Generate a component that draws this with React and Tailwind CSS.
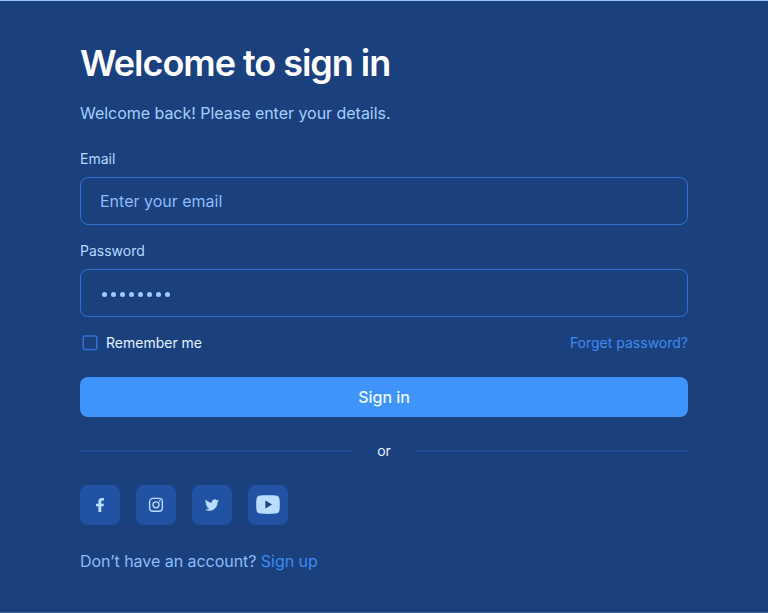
import React from "react";

function Facebook() {
  return (
    <svg viewBox="0 0 20 20" className="h-5 w-5 fill-current">
      <path d="M8.400 17v-5.800H6V8.700h2.400V6.500C8.400 4.100 9.700 3 12 3c.8 0 1.400.1 2 .2v2.300h-1.200c-1.100 0-1.500.5-1.500 1.400v1.800h2.600l-.4 2.500h-2.200V17z" />
    </svg>
  );
}

function Instagram() {
  return (
    <svg viewBox="0 0 20 20" className="h-5 w-5" fill="none" stroke="currentColor" strokeWidth="1.35">
      <rect x="3.6" y="3.4" width="12.8" height="12.8" rx="3.4" />
      <circle cx="10" cy="9.8" r="3" />
      <circle cx="13.7" cy="6.1" r=".85" fill="currentColor" stroke="none" />
    </svg>
  );
}

function Twitter() {
  return (
    <svg viewBox="0 0 24 24" className="h-[14px] w-[14px] fill-current">
      <path d="M23.95 4.57a10 10 0 0 1-2.82.77 4.96 4.96 0 0 0 2.16-2.72c-.95.55-2 .96-3.13 1.18a4.92 4.92 0 0 0-8.38 4.48C7.69 8.09 4.07 6.13 1.64 3.16a4.92 4.92 0 0 0 1.52 6.57 4.9 4.9 0 0 1-2.23-.61v.06a4.92 4.92 0 0 0 3.95 4.83 5 5 0 0 1-2.21.08 4.94 4.94 0 0 0 4.6 3.42A9.87 9.87 0 0 1 0 19.54a14 14 0 0 0 7.55 2.21c9.05 0 14-7.5 14-13.98 0-.21 0-.42-.02-.63a9.94 9.94 0 0 0 2.42-2.57z" />
    </svg>
  );
}

function Youtube() {
  return (
    <svg viewBox="0 0 24 20" className="h-5 w-6">
      <path fill="currentColor" d="M4.200.5C9.400 0 14.600 0 19.800.5c2.200.2 3.500 1.500 3.700 3.600.4 3.600.4 7.200 0 10.800-.2 2.100-1.500 3.400-3.700 3.600-5.200.5-10.400.5-15.600 0C2 18.300.7 17 .5 14.900.1 11.300.1 7.700.5 4.100.7 2 2 .7 4.200.5z" />
      <path fill="#1a4483" d="M9.400 5.600v7.800l6.600-3.900z" />
    </svg>
  );
}

const socials = [
  { name: "Facebook", Icon: Facebook },
  { name: "Instagram", Icon: Instagram },
  { name: "Twitter", Icon: Twitter },
  { name: "YouTube", Icon: Youtube },
];

const dots = Array.from({ length: 8 }, (_, i) => i);

export default function App() {
  return (
    <main className="flex h-[613px] w-full flex-col border-t border-b border-t-[#93c5fd] border-b-[#476ba0] bg-[#1a407e] px-20 pt-[42px] font-['Inter',sans-serif]">
      <h1 className="h-10 text-[36px] leading-10 font-semibold tracking-[-1.04px] whitespace-nowrap text-white">Welcome to sign in</h1>
      <p className="mt-[18px] text-base leading-6 tracking-[-0.03px] text-[#a5d0fc]">Welcome back! Please enter your details.</p>

      <label className="mt-6 text-sm leading-5 text-[#b5dafd]">Email</label>
      <div className="mt-2 flex h-12 shrink-0 items-center rounded-lg border border-[#3270cd] px-[19px] text-base text-[#8dbcf9]">Enter your email</div>

      <label className="mt-4 text-sm leading-5 text-[#b5dafd]">Password</label>
      <div className="mt-2 flex h-12 shrink-0 items-center gap-1 rounded-lg border border-[#3270cd] px-[21px] pt-[2px]">
        {dots.map((i) => (
          <span key={i} className="h-[5px] w-[5px] rounded-full bg-[#9dcbff]" />
        ))}
      </div>

      <div className="mt-4 flex items-center justify-between text-sm leading-5">
        <div className="flex items-center text-[#e4f3ff]">
          <svg viewBox="0 0 16 16" className="mr-2 ml-[2px] h-4 w-4" fill="none" stroke="#3471d2" strokeWidth="1.5">
            <rect x="1.25" y="1" width="13.5" height="13.5" rx="1.2" />
          </svg>
          Remember me
        </div>
        <a className="text-[#3f8bf0]">Forget password?</a>
      </div>

      <button className="mt-6 h-10 shrink-0 rounded-lg bg-[#4094f9] text-base font-medium tracking-[-0.05px] text-[#ecf7ff]">Sign in</button>

      <div className="mt-6 flex items-center gap-6 text-sm leading-5 text-[#e4f3ff]">
        <span className="h-[2px] flex-1 bg-[#1f4c96]" />
        or
        <span className="h-[2px] flex-1 bg-[#1f4c96]" />
      </div>

      <div className="mt-6 flex gap-4">
        {socials.map(({ name, Icon }) => (
          <a key={name} aria-label={name} className="flex h-10 w-10 items-center justify-center rounded-lg bg-[#2252a3] text-[#b9ddff]">
            <Icon />
          </a>
        ))}
      </div>

      <p className="mt-6 text-base leading-6 tracking-[-0.04px] text-[#8dbcf9]">
        Don’t have an account? <a className="text-[#3f8bf0]">Sign up</a>
      </p>
    </main>
  );
}
